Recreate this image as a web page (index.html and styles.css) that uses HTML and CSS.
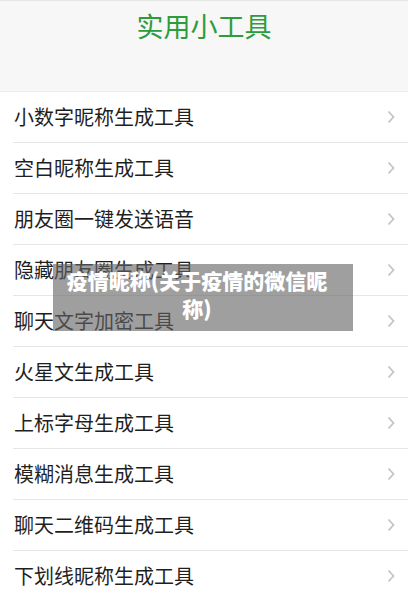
FILE: index.html
```html
<!DOCTYPE html>
<html lang="zh-CN">
<head>
<meta charset="utf-8">
<title>实用小工具</title>
<link rel="stylesheet" href="styles.css">
</head>
<body>
<header class="top">
  <h1 class="title">实用小工具</h1>
</header>
<ul class="list">
  <li class="row"><span class="label">小数字昵称生成工具</span><svg class="chev" viewBox="0 0 8 14"><path d="M1.5 1.5 L6.5 7 L1.5 12.5"/></svg></li>
  <li class="row"><span class="label">空白昵称生成工具</span><svg class="chev" viewBox="0 0 8 14"><path d="M1.5 1.5 L6.5 7 L1.5 12.5"/></svg></li>
  <li class="row"><span class="label">朋友圈一键发送语音</span><svg class="chev" viewBox="0 0 8 14"><path d="M1.5 1.5 L6.5 7 L1.5 12.5"/></svg></li>
  <li class="row"><span class="label">隐藏朋友圈生成工具</span><svg class="chev" viewBox="0 0 8 14"><path d="M1.5 1.5 L6.5 7 L1.5 12.5"/></svg></li>
  <li class="row"><span class="label">聊天文字加密工具</span><svg class="chev" viewBox="0 0 8 14"><path d="M1.5 1.5 L6.5 7 L1.5 12.5"/></svg></li>
  <li class="row"><span class="label">火星文生成工具</span><svg class="chev" viewBox="0 0 8 14"><path d="M1.5 1.5 L6.5 7 L1.5 12.5"/></svg></li>
  <li class="row"><span class="label">上标字母生成工具</span><svg class="chev" viewBox="0 0 8 14"><path d="M1.5 1.5 L6.5 7 L1.5 12.5"/></svg></li>
  <li class="row"><span class="label">模糊消息生成工具</span><svg class="chev" viewBox="0 0 8 14"><path d="M1.5 1.5 L6.5 7 L1.5 12.5"/></svg></li>
  <li class="row"><span class="label">聊天二维码生成工具</span><svg class="chev" viewBox="0 0 8 14"><path d="M1.5 1.5 L6.5 7 L1.5 12.5"/></svg></li>
  <li class="row"><span class="label">下划线昵称生成工具</span><svg class="chev" viewBox="0 0 8 14"><path d="M1.5 1.5 L6.5 7 L1.5 12.5"/></svg></li>
</ul>
<div class="caption">疫情昵称(关于疫情的微信昵称)</div>
</body>
</html>
```
FILE: styles.css
```css
html, body {
  margin: 0;
  padding: 0;
  background: #ffffff;
  font-family: "Noto Sans CJK SC", "Noto Sans", sans-serif;
}

.top {
  height: 92px;
  box-sizing: border-box;
  background: #f7f7f7;
  border-top: 1px solid #e6e6e6;
  border-bottom: 1px solid #ececec;
}

.title {
  margin: 0;
  padding-top: 6px;
  text-align: center;
  font-size: 27px;
  line-height: 38px;
  font-weight: 400;
  color: #2c9c3c;
}

.list {
  list-style: none;
  margin: 0;
  padding: 0 0 0 13px;
}

.row {
  display: flex;
  align-items: center;
  justify-content: space-between;
  height: 50px;
  border-bottom: 1px solid #e6e6e6;
  padding: 0 13px 0 1px;
}

.label {
  font-size: 20px;
  color: #1f1f1f;
  line-height: 28px;
}

.chev {
  width: 8px;
  height: 14px;
  fill: none;
  stroke: #c4c4c4;
  stroke-width: 1.8;
}

/* translucent title banner laid over the list */
.caption {
  position: absolute;
  left: 53px;
  top: 264px;
  width: 300px;
  height: 67px;
  box-sizing: border-box;
  padding: 2px 18px 0 6px;
  background: rgba(100, 100, 100, 0.62);
  color: #ffffff;
  font-weight: 900;
  font-size: 21px;
  line-height: 28px;
  text-align: center;
}
```
